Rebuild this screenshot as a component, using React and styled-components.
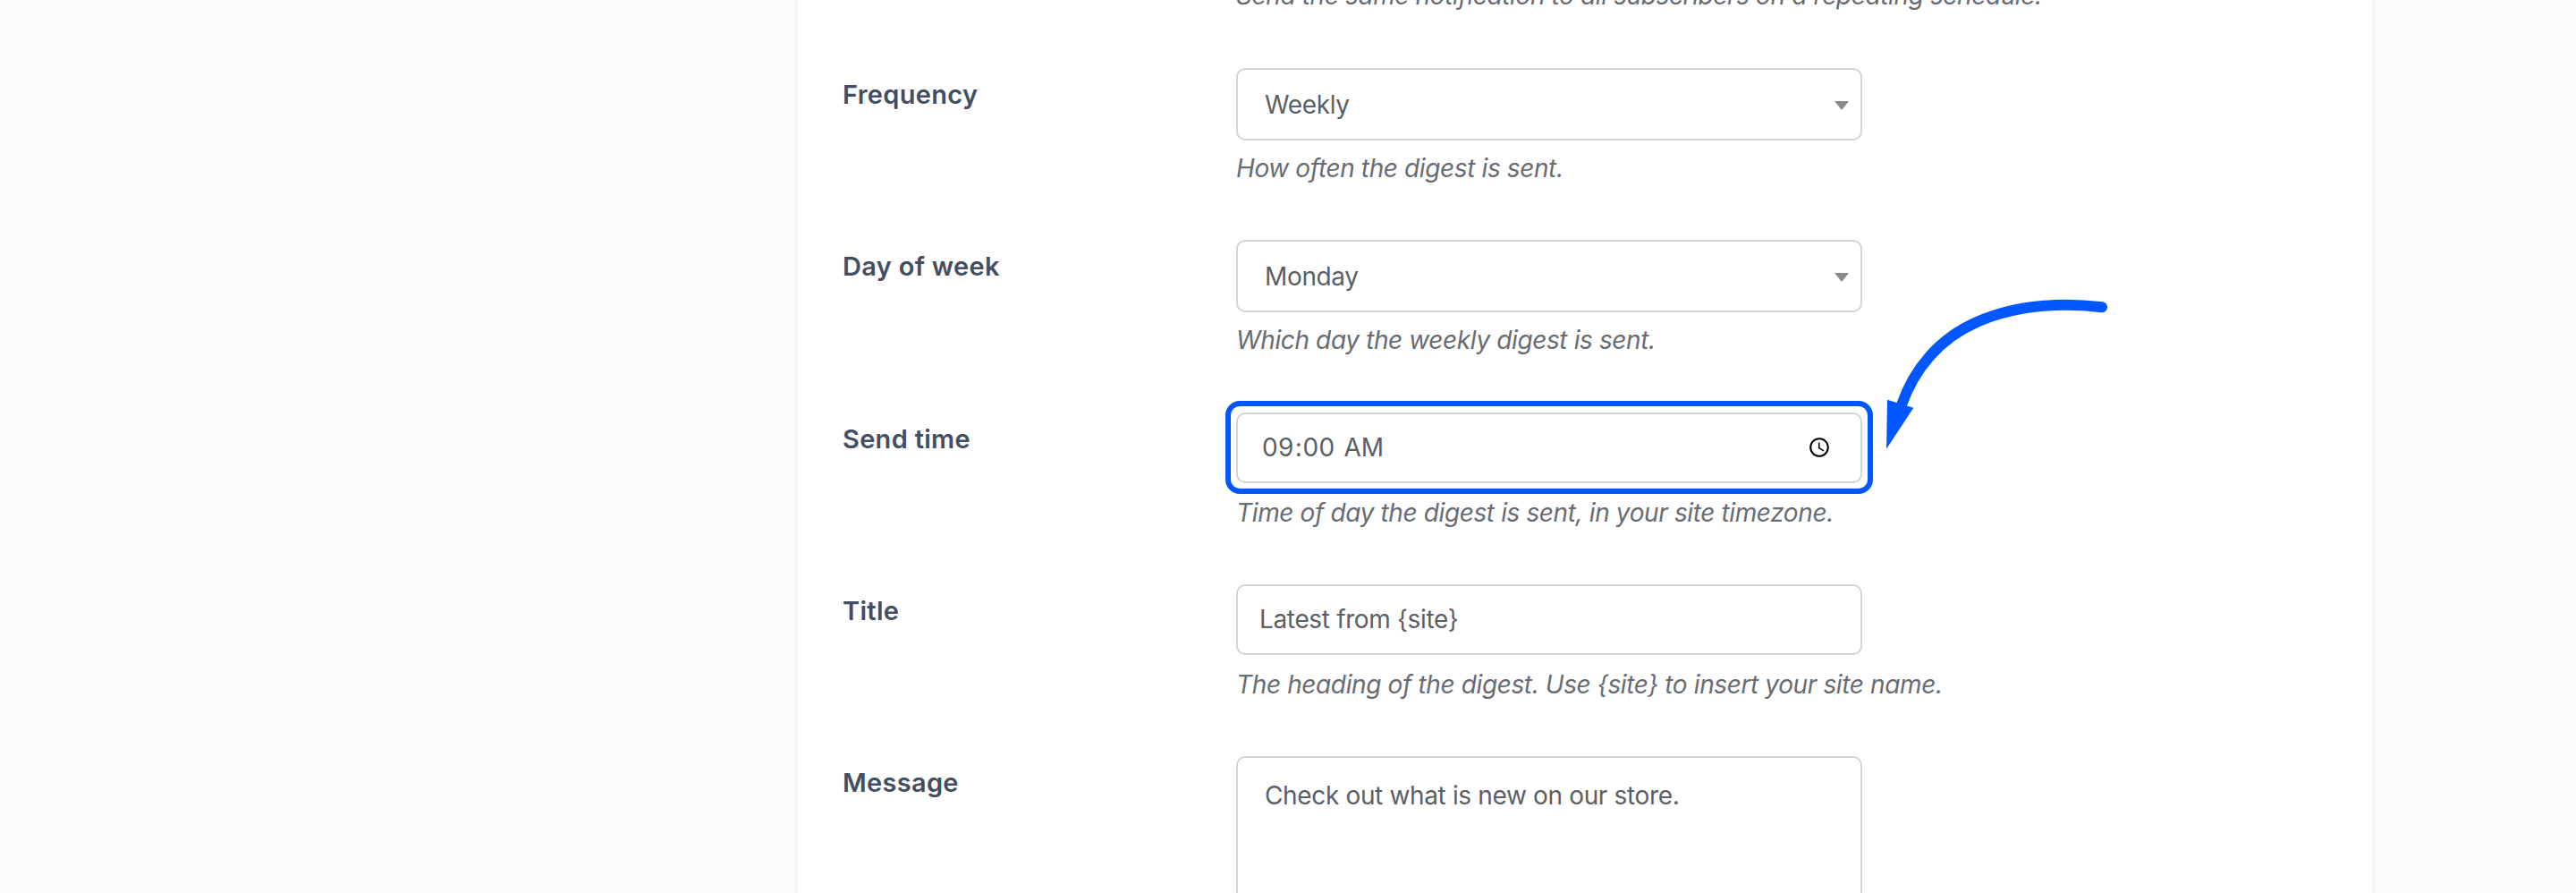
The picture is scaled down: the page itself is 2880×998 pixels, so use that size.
import React from "react";
import styled, { createGlobalStyle } from "styled-components";

const Global = createGlobalStyle`
  html, body { margin: 0; padding: 0; height: 100%; overflow: hidden; background: #fafbfd; }
  body { font-family: Inter, "Liberation Sans", sans-serif; }
`;

const Page = styled.div`
  height: 998px;
  overflow: hidden;
  padding-left: 892px;
  box-sizing: border-box;
`;

const Card = styled.main`
  width: 1760px;
  min-height: 1400px;
  margin-top: -25px;
  padding: 0 50px;
  box-sizing: border-box;
  background: #fff;
  box-shadow: 0 0 10px rgba(40, 50, 70, 0.03);
`;

const Row = styled.section`
  display: grid;
  grid-template-columns: 440px 700px;
  padding-bottom: ${(p) => p.$gap || 60.25}px;
`;

const Label = styled.label`
  grid-column: 1;
  padding-top: 10px;
  font-size: 29px;
  letter-spacing: 0.3px;
  line-height: 40px;
  font-weight: 600;
  color: #434e62;
`;

const Field = styled.div`
  grid-column: 2;
  min-width: 0;
`;

const Hint = styled.p`
  margin: ${(p) => p.$top ?? 11}px 0 0;
  font-size: 28px;
  letter-spacing: -0.38px;
  line-height: 40px;
  font-style: italic;
  color: #686c72;
  white-space: nowrap;
`;

const SelectWrap = styled.div`
  position: relative;
  &::after {
    content: "";
    position: absolute;
    right: 15px;
    top: 37px;
    border-left: 8px solid transparent;
    border-right: 8px solid transparent;
    border-top: 10px solid #8a8a8a;
    pointer-events: none;
  }
`;

const controlBase = `
  display: block;
  width: 100%;
  box-sizing: border-box;
  background: #fff;
  border: 2px solid #d3d4d5;
  border-radius: 10px;
  color: #5a5f65;
  font-family: Inter, "Liberation Sans", sans-serif;
  font-size: 28px;
  letter-spacing: -0.35px;
  outline: none;
  margin: 0;
`;

const Select = styled.select`
  ${controlBase}
  height: 81px;
  padding: 0 60px 0 30px;
  appearance: none;
`;

const Input = styled.input`
  ${controlBase}
  height: 79px;
  padding: 0 ${(p) => (p.type === "time" ? "33px" : "24px")} 0 ${(p) => (p.type === "time" ? "26px" : "24px")};
  &::-webkit-datetime-edit-hour-field,
  &::-webkit-datetime-edit-minute-field {
    letter-spacing: 0.4px;
  }
  &::-webkit-datetime-edit-ampm-field {
    margin-left: 3px;
    letter-spacing: 0;
  }
  &::-webkit-calendar-picker-indicator {
    width: 26px;
    height: 26px;
    padding: 0;
    margin: 0;
  }
`;

const TextArea = styled.textarea`
  ${controlBase}
  height: 320px;
  padding: 22px 30px;
  line-height: 40px;
  resize: none;
`;

const Annotated = styled.div`
  position: relative;
`;

const Ring = styled.div`
  position: absolute;
  left: -12px;
  top: -13px;
  width: 724px;
  height: 104px;
  box-sizing: border-box;
  border: 6px solid #0057ff;
  border-radius: 16px;
  pointer-events: none;
`;

const Arrow = styled.svg`
  position: absolute;
  left: 713px;
  top: -136px;
  width: 275px;
  height: 185px;
  pointer-events: none;
`;

const SelectField = ({ value, options }) => (
  <SelectWrap>
    <Select defaultValue={value}>
      {options.map((o) => (
        <option key={o}>{o}</option>
      ))}
    </Select>
  </SelectWrap>
);

export default function App() {
  return (
    <>
      <Global />
      <Page>
        <Card>
          <Row $gap={61}>
            <Field>
              <Hint $top={0}>Send the same notification to all subscribers on a repeating schedule.</Hint>
            </Field>
          </Row>
          <Row>
            <Label>Frequency</Label>
            <Field>
              <SelectField value="Weekly" options={["Daily", "Weekly", "Monthly"]} />
              <Hint>How often the digest is sent.</Hint>
            </Field>
          </Row>
          <Row>
            <Label>Day of week</Label>
            <Field>
              <SelectField value="Monday" options={["Monday", "Tuesday", "Wednesday"]} />
              <Hint>Which day the weekly digest is sent.</Hint>
            </Field>
          </Row>
          <Row>
            <Label>Send time</Label>
            <Field>
              <Annotated>
                <Input type="time" defaultValue="09:00" />
                <Ring />
                <Arrow viewBox="0 0 825 555" fill="none" aria-hidden="true">
                  <path
                    d="M765 55 C 620 38, 470 50, 345 105 C 220 160, 135 260, 92 385"
                    stroke="#0057ff"
                    strokeWidth="36"
                    strokeLinecap="round"
                  />
                  <polygon points="45,365 133,392 42,530" fill="#0057ff" />
                </Arrow>
              </Annotated>
              <Hint $top={13}>Time of day the digest is sent, in your site timezone.</Hint>
            </Field>
          </Row>
          <Row>
            <Label>Title</Label>
            <Field>
              <Input type="text" defaultValue="Latest from {site}" />
              <Hint $top={13}>The heading of the digest. Use {"{site}"} to insert your site name.</Hint>
            </Field>
          </Row>
          <Row>
            <Label>Message</Label>
            <Field>
              <TextArea defaultValue="Check out what is new on our store." />
            </Field>
          </Row>
        </Card>
      </Page>
    </>
  );
}
